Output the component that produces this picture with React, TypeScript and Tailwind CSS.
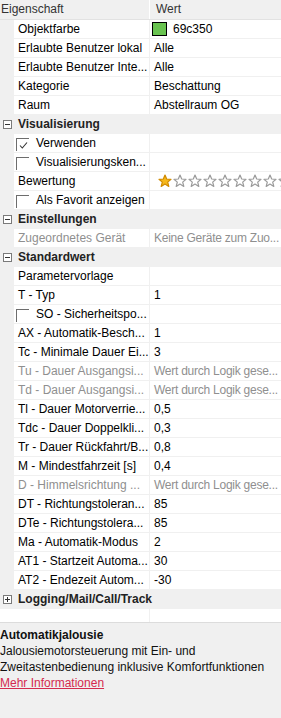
import React from 'react'

type RowDef =
  | { kind: 'cat'; name: string; open: boolean }
  | { kind: 'row'; name: string; value?: string; dim?: boolean; check?: 'on' | 'off'; swatch?: string; stars?: boolean }

const rows: RowDef[] = [
  { kind: 'row', name: 'Objektfarbe', value: '69c350', swatch: '#69c350' },
  { kind: 'row', name: 'Erlaubte Benutzer lokal', value: 'Alle' },
  { kind: 'row', name: 'Erlaubte Benutzer Inte...', value: 'Alle' },
  { kind: 'row', name: 'Kategorie', value: 'Beschattung' },
  { kind: 'row', name: 'Raum', value: 'Abstellraum OG' },
  { kind: 'cat', name: 'Visualisierung', open: true },
  { kind: 'row', name: 'Verwenden', check: 'on' },
  { kind: 'row', name: 'Visualisierungsken...', check: 'off' },
  { kind: 'row', name: 'Bewertung', stars: true },
  { kind: 'row', name: 'Als Favorit anzeigen', check: 'off' },
  { kind: 'cat', name: 'Einstellungen', open: true },
  { kind: 'row', name: 'Zugeordnetes Gerät', value: 'Keine Geräte zum Zuo...', dim: true },
  { kind: 'cat', name: 'Standardwert', open: true },
  { kind: 'row', name: 'Parametervorlage' },
  { kind: 'row', name: 'T - Typ', value: '1' },
  { kind: 'row', name: 'SO - Sicherheitspo...', check: 'off' },
  { kind: 'row', name: 'AX - Automatik-Besch...', value: '1' },
  { kind: 'row', name: 'Tc - Minimale Dauer Ei...', value: '3' },
  { kind: 'row', name: 'Tu - Dauer Ausgangsi...', value: 'Wert durch Logik gese...', dim: true },
  { kind: 'row', name: 'Td - Dauer Ausgangsi...', value: 'Wert durch Logik gese...', dim: true },
  { kind: 'row', name: 'Tl - Dauer Motorverrie...', value: '0,5' },
  { kind: 'row', name: 'Tdc - Dauer Doppelkli...', value: '0,3' },
  { kind: 'row', name: 'Tr - Dauer Rückfahrt/B...', value: '0,8' },
  { kind: 'row', name: 'M - Mindestfahrzeit [s]', value: '0,4' },
  { kind: 'row', name: 'D - Himmelsrichtung ...', value: 'Wert durch Logik gese...', dim: true },
  { kind: 'row', name: 'DT - Richtungstoleran...', value: '85' },
  { kind: 'row', name: 'DTe - Richtungstolera...', value: '85' },
  { kind: 'row', name: 'Ma - Automatik-Modus', value: '2' },
  { kind: 'row', name: 'AT1 - Startzeit Automa...', value: '30' },
  { kind: 'row', name: 'AT2 - Endezeit Autom...', value: '-30' },
  { kind: 'cat', name: 'Logging/Mail/Call/Track', open: false },
]

function Star({ on }: { on: boolean }) {
  return (
    <svg width="14" height="14" viewBox="0 0 14 14" className="shrink-0">
      <path
        d="M7 1 L8.7 5 L13 5.3 L9.7 8.1 L10.8 12.4 L7 10.1 L3.2 12.4 L4.3 8.1 L1 5.3 L5.3 5 Z"
        fill={on ? '#f6b81c' : '#ffffff'}
        stroke={on ? '#d08a00' : '#9a9a9a'}
        strokeWidth="1.2"
        strokeLinejoin="round"
      />
    </svg>
  )
}

function Box({ open }: { open: boolean }) {
  return (
    <div className="relative w-[9px] h-[9px] border border-[#7a7a7a] bg-white shrink-0">
      <div className="absolute left-[1px] top-[3px] w-[5px] h-px bg-[#333]" />
      {!open && <div className="absolute left-[3px] top-[1px] w-px h-[5px] bg-[#333]" />}
    </div>
  )
}

function Check({ on }: { on: boolean }) {
  return (
    <div className="relative w-[13px] h-[13px] border-t border-l border-[#6d6d6d] shrink-0 mr-[7px] mt-[4px] self-start">
      {on && (
        <svg width="11" height="11" viewBox="0 0 11 11" className="absolute left-[1px] top-[1px]">
          <path d="M2 5.5 L4.3 8 L9 2.5" fill="none" stroke="#333" strokeWidth="1.1" />
        </svg>
      )}
    </div>
  )
}

export default function App() {
  return (
    <div className="w-[281px] h-[718px] bg-[#f0f0f0] font-['Liberation_Sans',Arial,sans-serif] text-[12px] text-black overflow-hidden flex flex-col">
      {/* header */}
      <div className="flex h-[20px] bg-[#f0f0f0] border-b border-[#e2e2e2] text-[#333]">
        <div className="w-[150px] pl-[1px] leading-[19px] border-r border-white">Eigenschaft</div>
        <div className="flex-1 pl-[6px] leading-[19px]">Wert</div>
      </div>

      {/* grid */}
      <div className="bg-white">
        {rows.map((r, i) =>
          r.kind === 'cat' ? (
            <div key={i} className="flex items-center h-[19px] bg-[#f0f0f0]">
              <div className="w-[18px] pl-[3px] flex items-center">
                <Box open={r.open} />
              </div>
              <span className="font-bold text-[#222] whitespace-nowrap leading-[19px]">{r.name}</span>
            </div>
          ) : (
            <div key={i} className="flex h-[19px]">
              <div className="w-[14px] bg-[#f0f0f0] shrink-0" />
              <div className="w-[136px] shrink-0 flex border-b border-r border-[#f0f0f0] pl-[2px] overflow-hidden">
                {r.check && <Check on={r.check === 'on'} />}
                <span className={`whitespace-nowrap leading-[18px] ${r.check ? '' : 'pl-[2px]'} ${r.dim ? 'text-[#8f8f8f]' : ''}`}>{r.name}</span>
              </div>
              <div className="flex-1 flex items-center border-b border-[#f0f0f0] overflow-hidden">
                {r.swatch && (
                  <div className="flex items-center pl-[2px]">
                    <div className="w-[15px] h-[14px] border border-black" style={{ background: r.swatch }} />
                    <span className="pl-[6px] leading-[18px]">{r.value}</span>
                  </div>
                )}
                {r.stars && (
                  <div className="flex gap-px pl-[8px]">
                    {Array.from({ length: 10 }).map((_, k) => (
                      <Star key={k} on={k === 0} />
                    ))}
                  </div>
                )}
                {!r.swatch && !r.stars && r.value && (
                  <span className={`pl-[4px] whitespace-nowrap leading-[18px] ${r.dim ? 'text-[#8f8f8f] tracking-[-0.25px]' : ''}`}>{r.value}</span>
                )}
              </div>
            </div>
          )
        )}
        <div className="flex h-[13px]">
          <div className="w-[150px] border-r border-[#f0f0f0]" />
        </div>
      </div>

      {/* description */}
      <div className="flex-1 border-t border-[#dcdcdc] bg-[#f0f0f0] pt-[4px] leading-[16px]">
        <div className="font-bold text-[#111]">Automatikjalousie</div>
        <div className="text-[#111]">Jalousiemotorsteuerung mit Ein- und</div>
        <div className="text-[#111]">Zweitastenbedienung inklusive Komfortfunktionen</div>
        <a className="text-[#d42a4f] underline">Mehr Informationen</a>
      </div>
    </div>
  )
}
